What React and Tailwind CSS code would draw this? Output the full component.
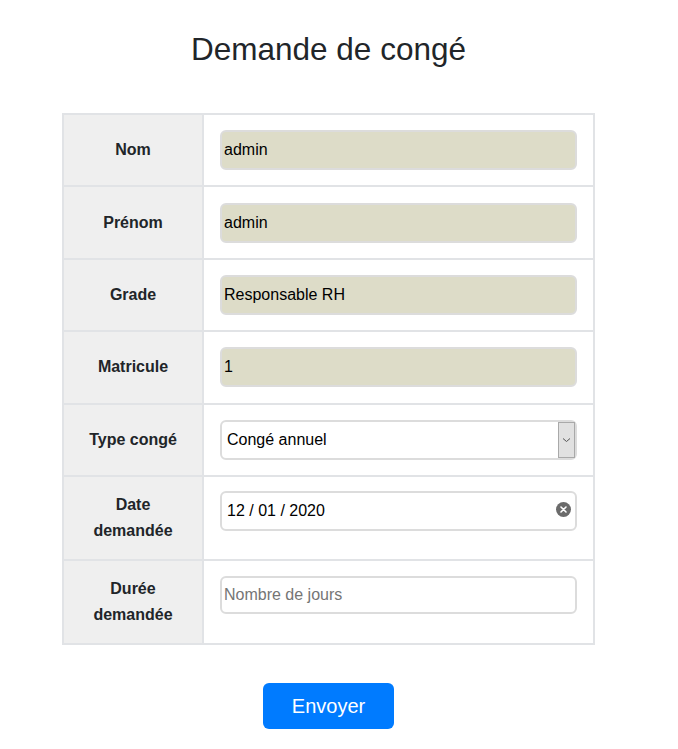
import { useState } from 'react';

const fieldBase =
  'w-full h-[40px] rounded-[6px] border-2 border-[#dcdcdc] px-[2px] text-[16px] text-black outline-none';

function Row({ label, children, tall }) {
  return (
    <tr>
      <th
        className={`w-[140px] border-2 border-[#e1e3e6] bg-[#efefef] text-center align-middle text-[16px] font-bold leading-[26px] text-[#212529] ${
          tall ? 'h-[84px]' : 'h-[72.4px]'
        }`}
      >
        {label}
      </th>
      <td className="border-2 border-[#e1e3e6] bg-white px-[16px] align-middle">
        {tall ? <div className="mb-[13px]">{children}</div> : children}
      </td>
    </tr>
  );
}

export default function App() {
  const [type, setType] = useState('annuel');
  const [date, setDate] = useState('12 / 01 / 2020');
  const [days, setDays] = useState('');

  return (
    <div className="min-h-[749px] w-[661px] bg-white pt-[30px]" style={{ fontFamily: '"Liberation Sans", Arial, sans-serif' }}>
      <h1 className="pr-[4px] text-center text-[31.5px] leading-[38px] text-[#212529]">Demande de congé</h1>

      <div className="mt-[45px] flex justify-center">
        <table className="ml-[-4px] w-[533px] border-collapse border-2 border-[#e1e3e6]">
          <tbody>
            <Row label="Nom">
              <input readOnly value="admin" className={`${fieldBase} bg-[#dddcc8]`} />
            </Row>
            <Row label="Prénom">
              <input readOnly value="admin" className={`${fieldBase} bg-[#dddcc8]`} />
            </Row>
            <Row label="Grade">
              <input readOnly value="Responsable RH" className={`${fieldBase} bg-[#dddcc8]`} />
            </Row>
            <Row label="Matricule">
              <input readOnly value="1" className={`${fieldBase} bg-[#dddcc8]`} />
            </Row>
            <Row label="Type congé">
              <div className="relative">
                <select
                  value={type}
                  onChange={(e) => setType(e.target.value)}
                  className={`${fieldBase} appearance-none bg-white pl-[5px]`}
                >
                  <option value="annuel">Congé annuel</option>
                  <option value="maladie">Congé maladie</option>
                </select>
                <div className="pointer-events-none absolute right-[2px] top-[2px] flex h-[36px] w-[17px] items-center justify-center border border-[#a9a9a9] bg-[#e1e1e1]">
                  <svg width="9" height="6" viewBox="0 0 9 6">
                    <path d="M1 1.5 L4.5 4.5 L8 1.5" fill="none" stroke="#555" strokeWidth="1" />
                  </svg>
                </div>
              </div>
            </Row>
            <Row label={<>Date<br />demandée</>} tall>
              <div className="relative">
                <input
                  value={date}
                  onChange={(e) => setDate(e.target.value)}
                  className={`${fieldBase} bg-white pl-[5px]`}
                />
                <div className="absolute right-[6px] top-[11px] flex h-[15px] w-[15px] items-center justify-center rounded-full bg-[#6b6b6b]">
                  <svg width="7" height="7" viewBox="0 0 7 7">
                    <path d="M1 1 L6 6 M6 1 L1 6" stroke="#fff" strokeWidth="1.6" strokeLinecap="round" />
                  </svg>
                </div>
              </div>
            </Row>
            <Row label={<>Durée<br />demandée</>} tall>
              <input
                value={days}
                onChange={(e) => setDays(e.target.value)}
                placeholder="Nombre de jours"
                className={`${fieldBase} !h-[38px] bg-white placeholder:text-[#757575]`}
              />
            </Row>
          </tbody>
        </table>
      </div>

      <div className="mt-[38px] flex justify-center">
        <button className="ml-[-4px] h-[46px] w-[131px] rounded-[6px] bg-[#007bff] text-[20px] text-white">
          Envoyer
        </button>
      </div>
    </div>
  );
}
